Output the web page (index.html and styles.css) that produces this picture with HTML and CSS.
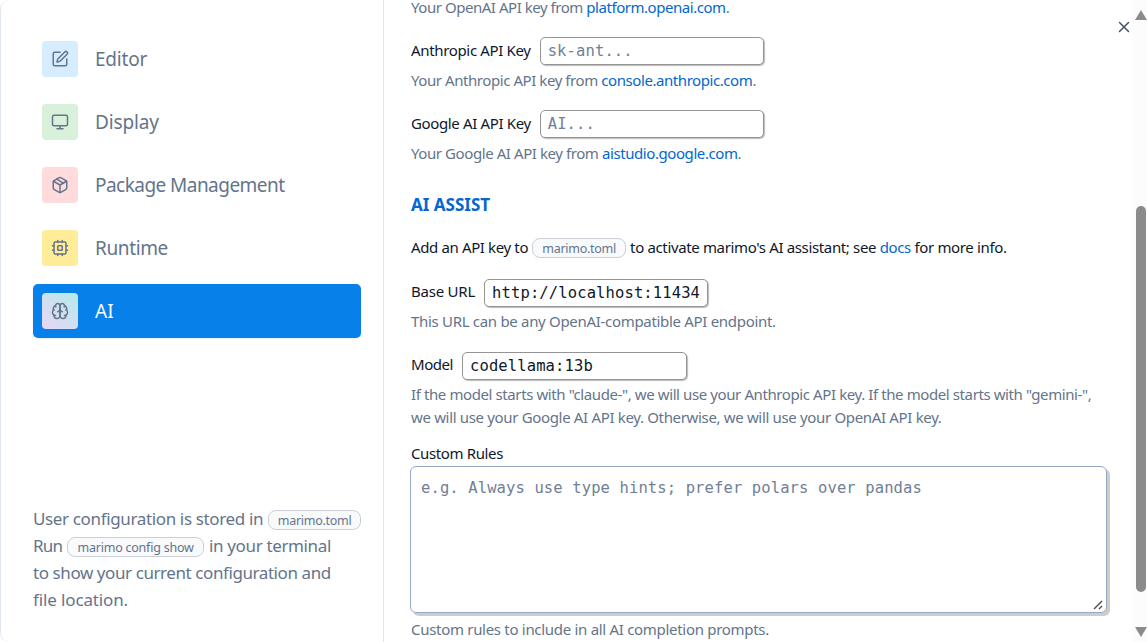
FILE: index.html
```html
<!DOCTYPE html>
<html lang="en">
<head>
<meta charset="utf-8">
<title>User settings</title>
<link rel="stylesheet" href="styles.css">
</head>
<body>
<div class="dialog">
  <aside class="sidebar">
    <nav class="tabs">
      <a class="tab"><span class="tile blue"><svg class="icon" viewBox="0 0 24 24"><path d="M12 3H5a2 2 0 0 0-2 2v14a2 2 0 0 0 2 2h14a2 2 0 0 0 2-2v-7"/><path d="M18.375 2.625a1 1 0 0 1 3 3l-9.013 9.014a2 2 0 0 1-.853.505l-2.873.84a.5.5 0 0 1-.62-.62l.84-2.873a2 2 0 0 1 .506-.852z"/></svg></span><span class="t t-editor">Editor</span></a>
      <a class="tab"><span class="tile green"><svg class="icon" viewBox="0 0 24 24"><rect width="20" height="14" x="2" y="3" rx="2"/><path d="M8 21h8M12 17v4"/></svg></span><span class="t t-display">Display</span></a>
      <a class="tab"><span class="tile red"><svg class="icon" viewBox="0 0 24 24"><path d="m7.5 4.27 9 5.15"/><path d="M21 8a2 2 0 0 0-1-1.73l-7-4a2 2 0 0 0-2 0l-7 4A2 2 0 0 0 3 8v8a2 2 0 0 0 1 1.73l7 4a2 2 0 0 0 2 0l7-4A2 2 0 0 0 21 16Z"/><path d="m3.3 7 8.7 5 8.7-5M12 22V12"/></svg></span><span class="t t-package">Package Management</span></a>
      <a class="tab"><span class="tile yellow"><svg class="icon" viewBox="0 0 24 24"><rect width="16" height="16" x="4" y="4" rx="2"/><rect width="6" height="6" x="9" y="9" rx="1"/><path d="M15 2v2M15 20v2M2 15h2M2 9h2M20 15h2M20 9h2M9 2v2M9 20v2"/></svg></span><span class="t t-runtime">Runtime</span></a>
      <a class="tab active"><span class="tile aurora"><svg class="icon" viewBox="0 0 24 24"><path d="M12 5a3 3 0 1 0-5.997.125 4 4 0 0 0-2.526 5.77 4 4 0 0 0 .556 6.588A4 4 0 1 0 12 18Z"/><path d="M12 5a3 3 0 1 1 5.997.125 4 4 0 0 1 2.526 5.77 4 4 0 0 1-.556 6.588A4 4 0 1 1 12 18Z"/><path d="M15 13a4.5 4.5 0 0 1-3-4 4.5 4.5 0 0 1-3 4M17.599 6.5a3 3 0 0 0 .399-1.375M6.003 5.125A3 3 0 0 0 6.401 6.5M3.477 10.896a4 4 0 0 1 .585-.396M19.938 10.5a4 4 0 0 1 .585.396M6 18a4 4 0 0 1-1.967-.516M19.967 17.484A4 4 0 0 1 18 18"/></svg></span><span class="t t-ai">AI</span></a>
    </nav>
    <div class="note">
      <div class="line"><span class="t n1">User configuration is stored in</span><span class="pill pill-a"><span class="t p1">marimo.toml</span></span></div>
      <div class="line"><span class="t n2">Run</span><span class="pill pill-b"><span class="t p2">marimo config show</span></span><span class="t n3">in your terminal</span></div>
      <div class="line"><span class="t n4">to show your current configuration and</span></div>
      <div class="line"><span class="t n5">file location.</span></div>
    </div>
  </aside>
  <main class="content">
    <p class="desc first"><span class="t d1">Your OpenAI API key from <a>platform.openai.com</a>.</span></p>
    <div class="field"><label class="t l1">Anthropic API Key</label><input class="input" placeholder="sk-ant..."></div>
    <p class="desc"><span class="t d2">Your Anthropic API key from <a>console.anthropic.com</a>.</span></p>
    <div class="field"><label class="t l2">Google AI API Key</label><input class="input" placeholder="AI..."></div>
    <p class="desc"><span class="t d3">Your Google AI API key from <a>aistudio.google.com</a>.</span></p>
    <h2 class="heading"><span class="t h1">AI ASSIST</span></h2>
    <p class="intro"><span class="t i1">Add an API key to</span><span class="pill pill-c"><span class="t p1">marimo.toml</span></span><span class="t i2">to activate marimo's AI assistant; see <a>docs</a> for more info.</span></p>
    <div class="field"><label class="t l3">Base URL</label><input class="input" value="http://localhost:11434/v1"></div>
    <p class="desc url-desc"><span class="t d4">This URL can be any OpenAI-compatible API endpoint.</span></p>
    <div class="field"><label class="t l4">Model</label><input class="input wide" value="codellama:13b"></div>
    <p class="desc model-desc"><span class="t d5">If the model starts with "claude-", we will use your Anthropic API key. If the model starts with "gemini-",</span><br><span class="t d6">we will use your Google AI API key. Otherwise, we will use your OpenAI API key.</span></p>
    <label class="rules-label"><span class="t l5">Custom Rules</span></label>
    <div class="rules-box">
      <textarea class="rules" placeholder="e.g. Always use type hints; prefer polars over pandas"></textarea>
      <svg class="grip" viewBox="0 0 10 10"><path d="M1 9 9 1M6 9l3-3"/></svg>
    </div>
    <p class="desc last"><span class="t d7">Custom rules to include in all AI completion prompts.</span></p>
    <svg class="close" viewBox="0 0 24 24"><path d="M18 6 6 18M6 6l12 12"/></svg>
  </main>
  <div class="scrollbar"><i class="up"></i><i class="thumb"></i><i class="down"></i></div>
</div>
</body>
</html>
```
FILE: styles.css
```css
* { box-sizing: border-box; }
body { margin: 0; background: #fff; font-family: "Noto Sans", sans-serif; color: #0f172a; overflow: hidden; }
p, h2 { margin: 0; }
a { color: #0367cf; }
.t { white-space: pre; }
.dialog { display: flex; width: 1147px; height: 642px; border-left: 1px solid #e2e8f0; border-radius: 9px 0 0 9px; overflow: hidden; }
.sidebar { width: 383px; flex: none; display: flex; flex-direction: column; justify-content: space-between; border-right: 1px solid #e2e8f0; padding: 32px 22px 29px 32px; color: #64748b; }
.tabs { display: flex; flex-direction: column; gap: 9px; }
.tab { display: flex; align-items: center; gap: 17px; height: 54px; padding: 0 9px; border-radius: 5px; font-size: 19px; color: #64748b; }
.tab.active { background: #0880ea; color: #f8fafc; box-shadow: 0 1px 2px rgba(0,0,0,.08); }
.t-editor { letter-spacing: -.2px; }
.t-display { letter-spacing: -.15px; }
.t-package { letter-spacing: -.54px; }
.t-runtime { letter-spacing: -.38px; }
.tile { width: 36px; height: 36px; border-radius: 4px; display: grid; place-items: center; color: #64748b; }
.blue { background: #d5edff; }
.green { background: #d9f1da; }
.red { background: #ffdbdc; }
.yellow { background: #ffec99; }
.aurora { background: linear-gradient(45deg, #e9d5f8, #b5ebe9); }
.icon { width: 18px; height: 18px; fill: none; stroke: currentColor; stroke-width: 2; stroke-linecap: round; stroke-linejoin: round; }
.note { font-size: 17px; line-height: 27px; }
.line { display: flex; align-items: center; height: 27px; }
.n1 { letter-spacing: -.36px; }
.n2 { letter-spacing: -.85px; }
.n3 { letter-spacing: -.36px; }
.n4 { letter-spacing: -.42px; }
.n5 { letter-spacing: -.13px; }
.pill { display: inline-flex; flex: none; align-items: center; justify-content: center; height: 20px; border: 1px solid #cbcfd6; border-radius: 8px; background: #f8fafc; font-size: 12.5px; line-height: 18px; color: #64748b; margin: 2px 5px 0; padding-top: 2px; }
.pill-a { width: 93px; }
.pill-b { width: 137px; }
.pill-c { width: 94px; margin: 1px 4px 0; }
.p1 { letter-spacing: -.29px; }
.p2 { letter-spacing: -.23px; }
.content { position: relative; flex: 1; min-width: 0; padding-left: 27px; display: flex; flex-direction: column; font-size: 15px; }
.desc { flex: none; color: #64748b; line-height: 23px; margin: 3px 0 18px; }
.desc.first { margin: -4px 0 18px; }
.d1 { letter-spacing: -.46px; }
.d2 { letter-spacing: -.43px; }
.d3 { letter-spacing: -.42px; }
.d4 { letter-spacing: -.31px; }
.d5 { letter-spacing: -.4px; }
.d6 { letter-spacing: -.335px; }
.d7 { letter-spacing: -.3px; }
.l1 { letter-spacing: -.34px; }
.l2 { letter-spacing: -.36px; }
.l3 { letter-spacing: -.22px; }
.l4 { letter-spacing: -.45px; }
.l5 { letter-spacing: -.37px; }
.i1 { letter-spacing: -.37px; }
.i2 { letter-spacing: -.355px; }
.field { flex: none; display: flex; align-items: center; gap: 9px; height: 28px; margin-bottom: 1px; }
.field label { padding-bottom: 2px; }
.field .l3, .field .l4 { padding-bottom: 4px; }
.input, .rules { font-family: "DejaVu Sans Mono", monospace; font-size: 15.5px; letter-spacing: .12px; color: #0f172a; background: #fff; outline: none; }
.input { width: 224px; height: 28px; border: 1px solid #949494; border-radius: 5px; padding: 0 6px 0 7px; box-shadow: 1px 1px 1px #bbb; }
.input.wide { width: 225px; }
.input::placeholder, .rules::placeholder { color: #718096; opacity: 1; }
.heading { flex: none; color: #0367cf; font-size: 17px; line-height: 24px; margin-top: 10px; }
.intro { flex: none; display: flex; align-items: center; height: 24px; margin: 18px 0 20px; }
.url-desc { margin: 2px 0 19px; }
.model-desc { margin: 2px 0 13px; }
.rules-label { flex: none; height: 24px; line-height: 23px; }
.rules-box { position: relative; flex: none; width: 697px; height: 147px; margin-left: -1px; }
.rules { display: block; width: 100%; height: 100%; padding: 9px 10px; border: 1px solid #94a9c8; border-radius: 6px; box-shadow: 3px 3px 0 #ccc; line-height: 25px; resize: none; }
.grip { position: absolute; right: 4px; bottom: 3px; width: 10px; height: 10px; fill: none; stroke: #4b4b4b; stroke-width: 1.4; }
.desc.last { margin: 5px 0 0; }
.close { position: absolute; left: 731px; top: 18px; width: 18px; height: 18px; fill: none; stroke: #475069; stroke-width: 2; stroke-linecap: round; }
.scrollbar { width: 15px; flex: none; padding-left: 3px; background: #fcfcfc; display: flex; flex-direction: column; align-items: center; }
.thumb { width: 10px; height: 386px; margin-top: 186px; border-radius: 5px; background: #8b8b8b; }
.up { margin-top: 10px; border: 6px solid transparent; border-top: 0; border-bottom: 10px solid #8b8b8b; }
.down { margin-top: 35px; border: 6px solid transparent; border-bottom: 0; border-top: 10px solid #8b8b8b; }
```
